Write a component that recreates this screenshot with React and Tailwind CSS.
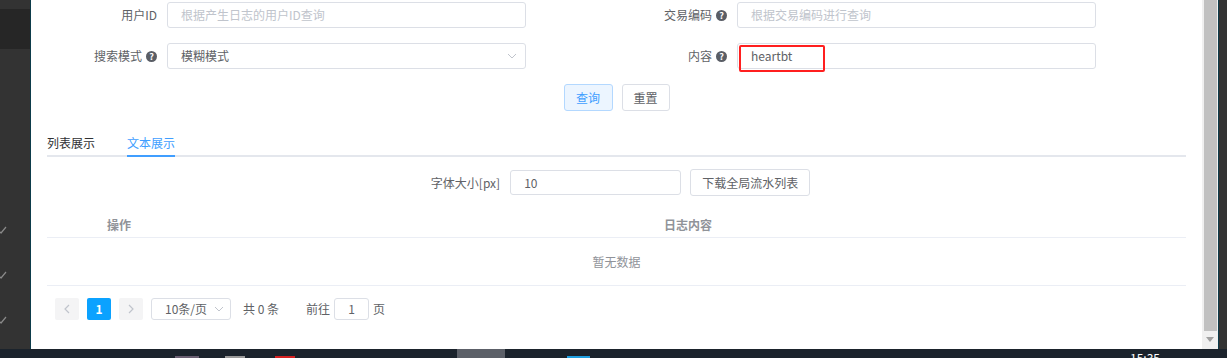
import React from 'react';

const font = { fontFamily: '"Noto Sans CJK SC", "Noto Sans", sans-serif' };

const Help = () => (
  <span className="ml-[4px] inline-flex h-[11px] w-[11px] items-center justify-center rounded-full bg-[#5a5e66] text-[9px] font-bold leading-none text-white">?</span>
);

const Chevron = ({ className }) => (
  <svg className={className} width="10" height="6" viewBox="0 0 10 6" fill="none">
    <path d="M1 1l4 4 4-4" stroke="#c0c4cc" strokeWidth="1" />
  </svg>
);

const Check = () => (
  <svg width="10" height="8" viewBox="0 0 10 8" fill="none" className="ml-[-3px]">
    <path d="M1 4l3 3 5-6" stroke="#8a8a8a" strokeWidth="1.2" />
  </svg>
);

const FormItem = ({ label, help, children }) => (
  <div className="flex items-center">
    <div className="flex w-[110px] items-center justify-end text-[12px] text-[#606266]">
      {label}
      {help && <Help />}
    </div>
    <div className="ml-[10px] w-[359px]">{children}</div>
  </div>
);

const Input = ({ placeholder, value }) => (
  <div className="flex h-[26px] items-center rounded-[3px] border border-[#dcdfe6] bg-white px-[13px] text-[12px]">
    {value ? <span className="text-[#606266]">{value}</span> : <span className="text-[#c0c4cc]">{placeholder}</span>}
  </div>
);

export default function App() {
  return (
    <div className="flex h-[358px] w-[1227px] flex-col overflow-hidden bg-[#333]" style={font}>
      <div className="flex h-[349px]">
        {/* sidebar */}
        <div className="flex w-[30px] flex-col bg-[#333]">
          <div className="mt-[9px] h-[40px] bg-[#262626]" />
          <div className="mt-[177px] flex flex-col gap-[37px]">
            <Check />
            <Check />
            <Check />
          </div>
        </div>
        <div className="w-px bg-[#0d3b4a]" />

        {/* main */}
        <div className="flex w-[1171px] flex-col bg-white px-[16px]">
          <div className="mt-[2px] grid grid-cols-[570px_570px] gap-y-[15px]">
            <FormItem label="用户ID">
              <Input placeholder="根据产生日志的用户ID查询" />
            </FormItem>
            <FormItem label="交易编码" help>
              <Input placeholder="根据交易编码进行查询" />
            </FormItem>
            <FormItem label="搜索模式" help>
              <div className="flex h-[26px] items-center justify-between rounded-[3px] border border-[#dcdfe6] bg-white pl-[13px] pr-[8px] text-[12px] text-[#606266]">
                <span>模糊模式</span>
                <Chevron />
              </div>
            </FormItem>
            <FormItem label="内容" help>
              <div className="relative">
                <Input value="heartbt" />
                <div className="absolute left-[2px] top-[2px] h-[27px] w-[86px] rounded-[2px] border-2 border-[#ff1f1f]" />
              </div>
            </FormItem>
          </div>

          <div className="mt-[15px] flex justify-center gap-[9px]">
            <button className="h-[27px] w-[49px] rounded-[3px] border border-[#b3d8ff] bg-[#ecf5ff] text-[12px] text-[#409eff]">查询</button>
            <button className="h-[27px] w-[48px] rounded-[3px] border border-[#dcdfe6] bg-white text-[12px] text-[#606266]">重置</button>
          </div>

          {/* tabs */}
          <div className="mt-[19px] flex h-[27px] items-stretch border-b-2 border-[#e4e7ed] text-[12px]">
            <div className="flex items-center text-[#303133]">列表展示</div>
            <div className="relative ml-[32px] flex items-center text-[#409eff]">
              文本展示
              <div className="absolute bottom-[-2px] left-0 right-0 h-[2px] bg-[#409eff]" />
            </div>
          </div>

          <div className="mt-[12px] flex items-center justify-center pl-[8px]">
            <span className="text-[12px] text-[#606266]">字体大小[px]</span>
            <div className="ml-[10px] flex h-[25px] w-[171px] items-center rounded-[3px] border border-[#dcdfe6] px-[13px] text-[12px] text-[#606266]">10</div>
            <button className="ml-[9px] h-[27px] w-[120px] rounded-[3px] border border-[#dcdfe6] bg-white text-[12px] text-[#606266]">下载全局流水列表</button>
          </div>

          {/* table */}
          <div className="flex h-[42px] items-end border-b border-[#ebeef5] pb-[3px] text-[12px] font-bold text-[#909399]">
            <div className="w-[143px] pl-[60px]">操作</div>
            <div className="flex-1 text-center">日志内容</div>
          </div>
          <div className="flex h-[48px] items-center justify-center border-b border-[#ebeef5] text-[12px] text-[#909399]">暂无数据</div>

          {/* pagination */}
          <div className="mt-[12px] flex h-[22px] items-center pl-[8px] text-[12px] text-[#606266]">
            <div className="flex h-[22px] w-[24px] items-center justify-center rounded-[2px] bg-[#f4f4f5]">
              <svg width="6" height="10" viewBox="0 0 6 10" fill="none"><path d="M5 1L1 5l4 4" stroke="#c0c4cc" strokeWidth="1.2" /></svg>
            </div>
            <div className="ml-[8px] flex h-[22px] w-[24px] items-center justify-center rounded-[2px] bg-[#0ba2ff] font-bold text-white">1</div>
            <div className="ml-[8px] flex h-[22px] w-[24px] items-center justify-center rounded-[2px] bg-[#f4f4f5]">
              <svg width="6" height="10" viewBox="0 0 6 10" fill="none"><path d="M1 1l4 4-4 4" stroke="#c0c4cc" strokeWidth="1.2" /></svg>
            </div>
            <div className="ml-[8px] flex h-[22px] w-[80px] items-center justify-between rounded-[3px] border border-[#dcdfe6] pl-[13px] pr-[6px]">
              <span>10条/页</span>
              <Chevron />
            </div>
            <span className="ml-[12px]">共 0 条</span>
            <span className="ml-[27px]">前往</span>
            <div className="ml-[4px] flex h-[22px] w-[35px] items-center justify-center rounded-[3px] border border-[#dcdfe6]">1</div>
            <span className="ml-[4px]">页</span>
          </div>
        </div>

        {/* scrollbar */}
        <div className="flex w-[16px] flex-col bg-[#f0f0f0]">
          <div className="ml-[2px] h-[331px] w-[13px] bg-[#c1c1c1]" />
          <div className="mt-[6px] flex justify-center">
            <svg width="8" height="5" viewBox="0 0 8 5"><path d="M0 0h8L4 5z" fill="#a0a0a0" /></svg>
          </div>
        </div>
        <div className="w-px bg-[#0d3b4a]" />
        <div className="flex-1 bg-[#333]" />
      </div>

      {/* taskbar */}
      <div className="relative flex h-[9px] bg-[#1b232c]">
        <div className="ml-[175px] mt-[7px] h-[2px] w-[24px] bg-[#6a5f72]" />
        <div className="ml-[26px] mt-[7px] h-[2px] w-[20px] bg-[#9a9a9a]" />
        <div className="ml-[30px] mt-[7px] h-[2px] w-[20px] bg-[#d42020]" />
        <div className="ml-[162px] h-[9px] w-[48px] bg-[#5c6068]" />
        <div className="ml-[62px] mt-[7px] h-[2px] w-[23px] bg-[#1e9fe0]" />
        <div className="ml-[540px] mt-[3px] text-[12px] leading-[12px] text-white">15:35</div>
      </div>
    </div>
  );
}
